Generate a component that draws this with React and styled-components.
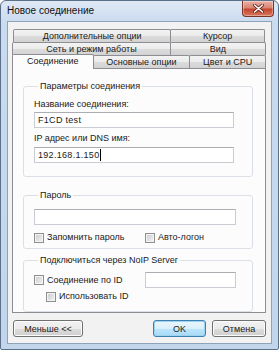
import React from "react";
import styled, { createGlobalStyle } from "styled-components";

const Global = createGlobalStyle`
  html, body { margin: 0; padding: 0; background: #ffffff; }
  body { font-family: "Liberation Sans", Arial, sans-serif; font-size: 9px; color: #1a1a1a; }
  * { box-sizing: border-box; }
`;

const Window = styled.div`
  width: 279px;
  height: 350px;
  border: 1px solid #5b718b;
  border-radius: 6px 6px 2px 2px;
  background: linear-gradient(#dfe9f5 0px, #cadbef 22px, #c2d5eb 100%);
  display: flex;
  flex-direction: column;
`;

const TitleBar = styled.div`
  height: 21px;
  display: flex;
  justify-content: space-between;
  align-items: flex-start;
  padding-left: 6px;
  padding-right: 4px;
`;

const Title = styled.span`
  font-size: 10px;
  line-height: 19px;
  color: #111;
`;

const CloseButton = styled.div`
  width: 32px;
  height: 16px;
  margin-top: 0;
  border: 1px solid #7a3428;
  border-top: none;
  border-radius: 0 0 4px 4px;
  background: linear-gradient(#eab1a6 0%, #d98473 45%, #c6462f 55%, #d7765c 100%);
  box-shadow: inset 0 0 0 1px rgba(255, 255, 255, 0.35);
  display: flex;
  align-items: center;
  justify-content: center;
`;

const Client = styled.div`
  flex: 1;
  margin: 0 6px 5px 6px;
  border: 1px solid #8ea3ba;
  background: #f2f2f2;
  display: flex;
  flex-direction: column;
  padding: 7px 5px 6px 4px;
`;

const TabRow = styled.div`
  display: flex;
  height: 13px;
  margin: ${(p) => p.$inset || "0"};
  position: relative;
  z-index: ${(p) => p.$z || 0};
`;

const Tab = styled.div`
  width: ${(p) => p.$w}px;
  height: ${(p) => (p.$active ? 15 : 13)}px;
  margin-top: ${(p) => (p.$active ? -1 : 0)}px;
  margin-left: -1px;
  &:first-child { margin-left: 0; }
  border: 1px solid #8c8e94;
  border-bottom: none;
  border-radius: 2px 2px 0 0;
  background: ${(p) =>
    p.$active ? "#fcfcfc" : "linear-gradient(#f3f3f3 0%, #ebebeb 50%, #dcdcdc 51%, #d2d2d2 100%)"};
  display: flex;
  align-items: ${(p) => (p.$active ? "flex-start" : "center")};
  justify-content: center;
  font-size: 9px;
  line-height: 11px;
  padding-top: ${(p) => (p.$active ? 1 : 0)}px;
  position: relative;
  z-index: ${(p) => (p.$active ? 2 : 0)};
`;

const Panel = styled.div`
  flex: 1;
  border: 1px solid #8c8e94;
  background: #fcfcfc;
  display: flex;
  flex-direction: column;
  padding: 12px 12px 0 10px;
  gap: 0;
`;

const Group = styled.fieldset`
  margin: ${(p) => p.$mt || 0}px 0 0 0;
  padding: 0 0 ${(p) => p.$pb || 0}px 10px;
  border: 1px solid #dbe0e6;
  border-radius: 3px;
  min-width: 0;
  display: flex;
  flex-direction: column;
`;

const Legend = styled.legend`
  margin-left: 4px;
  padding: 0 2px;
  font-size: 9px;
  line-height: 11px;
`;

const FieldLabel = styled.div`
  margin-top: ${(p) => p.$mt}px;
  font-size: 9px;
  line-height: 11px;
`;

const TextBox = styled.div`
  width: ${(p) => p.$w}px;
  height: 16px;
  margin-top: ${(p) => p.$mt || 0}px;
  border: 1px solid #c9ccd2;
  border-top-color: #abadb3;
  background: #ffffff;
  display: flex;
  align-items: center;
  padding-left: 3px;
  font-size: 9px;
  letter-spacing: 0.3px;
`;

const Caret = styled.span`
  display: inline-block;
  width: 1px;
  height: 12px;
  background: #000;
  margin-left: 1px;
`;

const CheckRow = styled.div`
  display: flex;
  align-items: center;
  height: ${(p) => p.$h || 11}px;
  margin-top: ${(p) => p.$mt || 0}px;
  padding-left: ${(p) => p.$indent || 0}px;
`;

const CheckItem = styled.label`
  display: flex;
  align-items: center;
  gap: 3px;
  width: ${(p) => (p.$w ? `${p.$w}px` : "auto")};
  font-size: 9px;
  line-height: 11px;
`;

const Box = styled.span`
  width: 10px;
  height: 10px;
  border: 1px solid #8e8f8f;
  background: linear-gradient(135deg, #c9cbcf 0%, #e2e3e6 60%, #f4f4f4 100%);
  box-shadow: inset 0 0 0 1px #f4f4f4;
  flex: none;
`;

const ButtonBar = styled.div`
  display: flex;
  justify-content: space-between;
  align-items: center;
  margin-top: 7px;
  padding-left: 1px;
`;

const ButtonGroup = styled.div`
  display: flex;
  gap: 6px;
`;

const Button = styled.div`
  width: ${(p) => p.$w}px;
  height: 17px;
  border: 1px solid ${(p) => (p.$default ? "#3c7fb1" : "#707070")};
  border-radius: 3px;
  background: ${(p) =>
    p.$default
      ? "linear-gradient(#eaf6fd 0%, #d9f0fc 50%, #bee6fd 51%, #a7d9f5 100%)"
      : "linear-gradient(#f2f2f2 0%, #ebebeb 50%, #dddddd 51%, #cfcfcf 100%)"};
  box-shadow: inset 0 0 0 1px ${(p) => (p.$default ? "#9ed3f0" : "#fcfcfc")};
  display: flex;
  align-items: center;
  justify-content: center;
  font-size: 9px;
  color: #1a1a1a;
`;

export default function App() {
  return (
    <>
      <Global />
      <Window>
        <TitleBar>
          <Title>Новое соединение</Title>
          <CloseButton>
            <svg width="11" height="9" viewBox="0 0 11 9">
              <path d="M1.5 1 L9.5 8 M9.5 1 L1.5 8" stroke="#5a1e14" strokeWidth="3" strokeLinecap="round" />
              <path d="M1.5 1 L9.5 8 M9.5 1 L1.5 8" stroke="#ffffff" strokeWidth="1.6" strokeLinecap="round" />
            </svg>
          </CloseButton>
        </TitleBar>
        <Client>
          <TabRow $inset="0 1px">
            <Tab $w={159}>Дополнительные опции</Tab>
            <Tab $w={95}>Курсор</Tab>
          </TabRow>
          <TabRow>
            <Tab $w={159}>Сеть и режим работы</Tab>
            <Tab $w={96}>Вид</Tab>
          </TabRow>
          <TabRow $z={2}>
            <Tab $w={82} $active>Соединение</Tab>
            <Tab $w={98}>Основные опции</Tab>
            <Tab $w={77}>Цвет и CPU</Tab>
          </TabRow>
          <Panel>
            <Group $pb={13}>
              <Legend>Параметры соединения</Legend>
              <FieldLabel $mt={7}>Название соединения:</FieldLabel>
              <TextBox $w={200} $mt={2}>F1CD test</TextBox>
              <FieldLabel $mt={5}>IP адрес или DNS имя:</FieldLabel>
              <TextBox $w={200} $mt={3}>
                192.168.1.150<Caret />
              </TextBox>
            </Group>
            <Group $mt={13} $pb={5}>
              <Legend>Пароль</Legend>
              <TextBox $w={202} $mt={8} />
              <CheckRow $mt={7}>
                <CheckItem $w={111}>
                  <Box />
                  Запомнить пароль
                </CheckItem>
                <CheckItem>
                  <Box />
                  Авто-логон
                </CheckItem>
              </CheckRow>
            </Group>
            <Group $mt={6} $pb={9}>
              <Legend>Подключиться через NoIP Server</Legend>
              <CheckRow $mt={7} $h={14}>
                <CheckItem $w={111}>
                  <Box />
                  Соединение по ID
                </CheckItem>
                <TextBox $w={91} />
              </CheckRow>
              <CheckRow $mt={4} $indent={12}>
                <CheckItem>
                  <Box />
                  Использовать ID
                </CheckItem>
              </CheckRow>
            </Group>
          </Panel>
          <ButtonBar>
            <Button $w={70}>Меньше &lt;&lt;</Button>
            <ButtonGroup>
              <Button $w={53} $default>OK</Button>
              <Button $w={54}>Отмена</Button>
            </ButtonGroup>
          </ButtonBar>
        </Client>
      </Window>
    </>
  );
}
